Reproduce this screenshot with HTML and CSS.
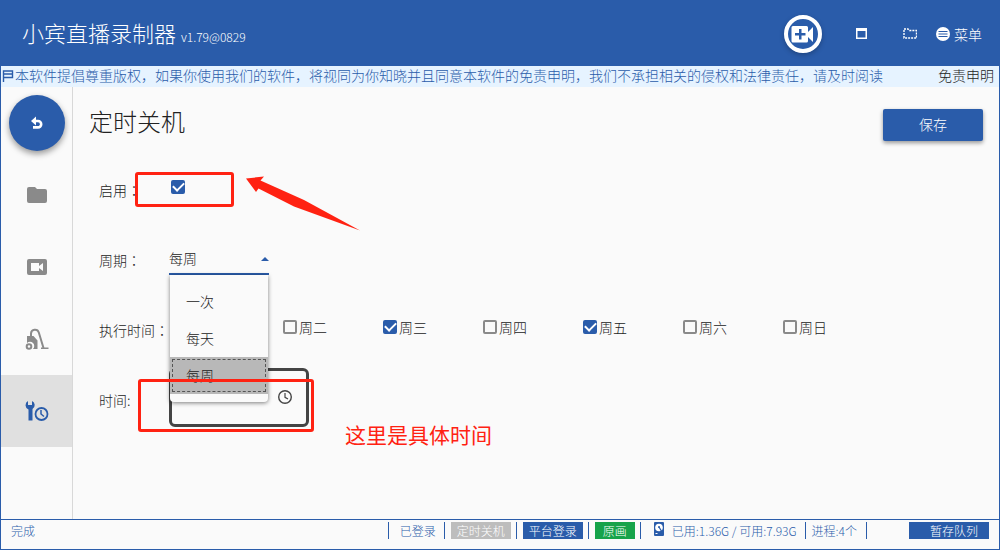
FILE: index.html
```html
<!DOCTYPE html>
<html lang="zh-CN">
<head>
<meta charset="utf-8">
<title>小宾直播录制器</title>
<link rel="stylesheet" href="styles.css">
</head>
<body>
<div class="app">
  <header class="topbar">
    <h1 class="brand">小宾直播录制器 <small class="version">v1.79@0829</small></h1>
    <nav class="tools">
      <button class="record" aria-label="添加录制">
        <svg width="28" height="28" viewBox="0 0 28 28"><path fill="#fff" fill-rule="evenodd" d="M4 6h13.500q1.500 0 1.500 1.500V12l5-5v15l-5-5v4q0 1.500-1.500 1.500H4q-1.500 0-1.500-1.500V7.500Q2.500 6 4 6zM10 9v4H6v2.500h4v4h2.500v-4h4V13h-4V9z"/></svg>
      </button>
      <button class="tool" aria-label="窗口"><svg width="12" height="12" viewBox="0 0 12 12"><path fill="#fff" fill-rule="evenodd" d="M1 0h11v11H1zM2.500 3v6.500h8V3z"/></svg></button>
      <button class="tool" aria-label="全屏"><svg width="14" height="12" viewBox="0 0 14 12"><path fill="none" stroke="#fff" stroke-width="1.400" stroke-dasharray="2 1" d="M1 10V1h4l1.500 1.500h7V10z"/></svg></button>
      <button class="menu-button"><svg width="14" height="14" viewBox="0 0 14 14"><circle cx="7" cy="7" r="7" fill="#fff"/><path stroke="#2a5caa" stroke-width="1.200" d="M2.500 4.500h9M2.500 7h9M2.500 9.500h9"/></svg>菜单</button>
    </nav>
  </header>

  <div class="notice">
    <svg class="flag" width="12" height="14" viewBox="0 0 12 14"><path fill="none" stroke="#2a5caa" stroke-width="1.400" d="M1.500 14V3h9v6.500h-9M1.500 6h9"/></svg>
    <p class="notice-text">本软件提倡尊重版权，如果你使用我们的软件，将视同为你知晓并且同意本软件的免责申明，我们不承担相关的侵权和法律责任，请及时阅读</p>
    <a class="notice-link" href="#">免责申明</a>
  </div>

  <div class="body">
    <nav class="sidebar">
      <div class="slot"><button class="back" aria-label="返回"><svg width="14" height="14" viewBox="0 0 14 14"><path fill="none" stroke="#fff" stroke-width="2.600" d="M4 5h4a3.200 3.200 0 0 1 0 6.400H3"/><path fill="#fff" d="M1 5 6 .5v9z"/></svg></button></div>
      <a class="slot" href="#" aria-label="文件"><svg width="24" height="24" viewBox="0 0 24 24"><path fill="#8a8a8a" d="M10 4H4a2 2 0 0 0-2 2v12a2 2 0 0 0 2 2h16a2 2 0 0 0 2-2V8a2 2 0 0 0-2-2h-8z"/></svg></a>
      <a class="slot" href="#" aria-label="录像"><svg width="24" height="24" viewBox="0 0 24 24"><path fill="#8a8a8a" fill-rule="evenodd" d="M4 4h16a2 2 0 0 1 2 2v12a2 2 0 0 1-2 2H4a2 2 0 0 1-2-2V6a2 2 0 0 1 2-2zM6 8v8h8v-3l4 3V8l-4 3V8z"/></svg></a>
      <a class="slot" href="#" aria-label="清理"><svg width="24" height="24" viewBox="0 0 24 24"><path fill="none" stroke="#8a8a8a" stroke-width="2" d="M6 10V6.500a4 4 0 0 1 7.800-1L18.500 21"/><path fill="#8a8a8a" d="M2 9h6.500l4 4.500V22H8a4.200 4.200 0 0 0-6-6zM16 20.500h7.500V22H16z"/><circle cx="4" cy="19.500" r="2.300" fill="none" stroke="#8a8a8a" stroke-width="2"/></svg></a>
      <a class="slot current" href="#" aria-label="定时设置"><svg width="24" height="24" viewBox="0 0 24 24"><path fill="#2a5caa" d="M3 2v4h4V2a4.500 4.500 0 0 1 .5 8v11.500H3.500V10.500A4.700 4.700 0 0 1 3 2z"/><circle cx="16.500" cy="15" r="6" fill="none" stroke="#2a5caa" stroke-width="1.800"/><path fill="none" stroke="#2a5caa" stroke-width="1.500" d="M16 11v4l3 2.500"/></svg></a>
    </nav>

    <main class="content">
      <div class="heading">
        <h2 class="title">定时关机</h2>
        <button class="save">保存</button>
      </div>

      <form class="form">
        <div class="row">
          <label class="label" for="enable">启用<span class="colon" lang="zh-TW">：</span></label>
          <div class="control inset"><input class="check" type="checkbox" id="enable" checked></div>
        </div>
        <div class="row">
          <label class="label" for="period">周期<span class="colon" lang="zh-TW">：</span></label>
          <div class="control">
            <div class="dropdown">
              <select class="select" id="period"><option>一次</option><option>每天</option><option selected>每周</option></select>
              <ul class="menu" role="listbox">
                <li class="option" role="option">一次</li>
                <li class="option" role="option">每天</li>
                <li class="option chosen" role="option" aria-selected="true">每周</li>
              </ul>
            </div>
          </div>
        </div>
        <div class="row">
          <span class="label">执行时间<span class="colon" lang="zh-TW">：</span></span>
          <div class="control days">
            <label class="day"><input class="check" type="checkbox" aria-label="周一"></label>
            <label class="day"><input class="check" type="checkbox">周二</label>
            <label class="day"><input class="check" type="checkbox" checked>周三</label>
            <label class="day"><input class="check" type="checkbox">周四</label>
            <label class="day"><input class="check" type="checkbox" checked>周五</label>
            <label class="day"><input class="check" type="checkbox">周六</label>
            <label class="day"><input class="check" type="checkbox">周日</label>
          </div>
        </div>
        <div class="row">
          <label class="label" for="time">时间:</label>
          <div class="control">
            <div class="time">
              <input class="time-input" type="text" id="time">
              <svg width="16" height="16" viewBox="0 0 16 16"><circle cx="8" cy="8" r="6.300" fill="none" stroke="#444" stroke-width="1.400"/><path fill="none" stroke="#444" stroke-width="1.200" d="M8 4v4.300l3 1.800"/></svg>
            </div>
          </div>
        </div>
      </form>
    </main>
  </div>

  <footer class="status">
    <span class="state">完成</span>
    <span class="cell login">已登录</span>
    <span class="cell"><span class="tag muted">定时关机</span></span>
    <span class="cell"><button class="tag">平台登录</button></span>
    <span class="cell"><button class="tag green">原画</button></span>
    <span class="cell disk"><svg width="12" height="14" viewBox="0 0 12 14"><rect x="1" width="10" height="14" rx="1" fill="#2a5caa"/><circle cx="6" cy="5.500" r="3.800" fill="#fff"/><circle cx="6" cy="5" r="1" fill="#2a5caa"/><path stroke="#2a5caa" stroke-width="1.300" d="m6 5 3 5"/><path stroke="#fff" d="M2.500 11.500h2"/></svg>已用:1.36G / 可用:7.93G</span>
    <span class="cell process">进程:4个</span>
    <span class="cell last"><button class="tag queue">暂存队列</button></span>
  </footer>

  <div class="mark mark-enable"></div>
  <div class="mark mark-time"></div>
  <svg class="arrow" width="116" height="58" viewBox="0 0 116 58"><path fill="#ff2212" d="M2 3.500 20 1.500l-3.500 4L60 25l56 30.500L50 31.500 14.500 13.500l-2.500 3.500z"/></svg>
  <p class="remark">这里是具体时间</p>
</div>
</body>
</html>
```

FILE: styles.css
```css
* {
  box-sizing: border-box;
}

body {
  margin: 0;
  font-family: "Noto Sans CJK SC", sans-serif;
  font-size: 14px;
  font-weight: 300;
  line-height: 20px;
  color: #222;
}

button, input, select {
  font: inherit;
  color: inherit;
  margin: 0;
  padding: 0;
  border: 0;
  background: none;
}

h1, h2, p, ul {
  margin: 0;
  padding: 0;
  font-weight: inherit;
}

a {
  color: inherit;
  text-decoration: none;
}

svg {
  display: block;
  flex: none;
}

.app {
  position: relative;
  display: flex;
  flex-direction: column;
  min-height: 100vh;
  border: 1px solid #2a5caa;
  border-top: 0;
  background: #fafafa;
}

.topbar {
  display: flex;
  align-items: center;
  justify-content: space-between;
  height: 66px;
  padding: 2px 17px 0 21px;
  background: #2a5caa;
  color: #fff;
}

.brand {
  font-size: 22px;
  line-height: 32px;
}

.version {
  font-size: 12px;
}

.tools {
  display: flex;
  align-items: center;
}

.record {
  display: grid;
  place-items: center;
  width: 38px;
  height: 38px;
  margin-right: 33px;
  border: 4px solid #fff;
  border-radius: 50%;
  box-shadow: 0 2px 5px rgba(0, 0, 0, 0.25);
}

.tool {
  margin-right: 36px;
}

.tool + .tool {
  margin-right: 19px;
}

.menu-button {
  display: flex;
  align-items: center;
  gap: 4px;
}

.notice {
  display: flex;
  align-items: center;
  height: 21px;
  padding: 0 5px 4px 1px;
  background: #e6f3ff;
  color: #2a5caa;
}

.notice-text {
  flex: 1;
  margin-left: 1px;
  white-space: nowrap;
}

.notice-link {
  color: #222;
}

.body {
  display: flex;
  flex: 1;
}

.sidebar {
  width: 72px;
  border-right: 1px solid #d8d8d8;
}

.slot {
  display: grid;
  place-items: center;
  height: 72px;
}

.current {
  background: #e0e0e0;
}

.back {
  display: grid;
  place-items: center;
  width: 56px;
  height: 56px;
  border-radius: 50%;
  background: #2a5caa;
  box-shadow: 0 3px 6px rgba(0, 0, 0, 0.4);
}

.content {
  flex: 1;
  padding: 0 16px;
}

.heading {
  display: flex;
  justify-content: space-between;
  height: 68px;
  padding-top: 16px;
}

.title {
  font-size: 24px;
  line-height: 36px;
}

.save {
  width: 100px;
  height: 32px;
  margin-top: 6px;
  padding-bottom: 2px;
  border-radius: 2px;
  background: #2a5caa;
  color: #fff;
  box-shadow: 0 2px 4px rgba(0, 0, 0, 0.4);
}

.form {
  padding-left: 10px;
}

.row {
  display: flex;
  align-items: center;
  height: 70px;
}

.label {
  width: 70px;
  white-space: nowrap;
}

.colon {
  font-family: "Noto Sans CJK TC", sans-serif;
}

.control {
  flex: 1;
  padding-bottom: 6px;
}

.inset {
  display: flex;
  padding-left: 2px;
}

.check {
  appearance: none;
  display: grid;
  place-items: center;
  width: 14px;
  height: 14px;
  border: 2px solid #8a8a8a;
  border-radius: 2px;
}

.check:checked {
  border-color: #2a5caa;
  background: #2a5caa;
}

.check:checked::after {
  content: "";
  width: 9px;
  height: 5px;
  margin-top: -3px;
  border: solid #fff;
  border-width: 0 0 2px 2px;
  transform: rotate(-45deg);
}

.dropdown {
  position: relative;
  width: 100px;
  margin-top: 4px;
}

.dropdown::after {
  content: "";
  position: absolute;
  right: 0;
  top: 14px;
  border: 4px solid transparent;
  border-top: 0;
  border-bottom-color: #2a5caa;
}

.select {
  appearance: none;
  display: block;
  width: 100%;
  height: 32px;
  border-bottom: 2px solid #2a5caa;
}

.menu {
  position: absolute;
  z-index: 1;
  top: 100%;
  left: 1px;
  right: 1px;
  padding: 8px 0;
  list-style: none;
  background: #fafafa;
  border-radius: 0 0 4px 4px;
  box-shadow: 0 1px 4px rgba(0, 0, 0, 0.5);
}

.option {
  padding: 8px 16px;
  line-height: 21px;
}

.chosen {
  background: #b8b8b8;
  outline: 1px dashed #555;
  outline-offset: -3px;
}

.days {
  display: flex;
  padding-left: 14px;
}

.day {
  display: flex;
  align-items: center;
  gap: 2px;
  width: 100px;
}

.time {
  display: flex;
  align-items: center;
  width: 140px;
  height: 59px;
  padding-right: 13px;
  border: 3px solid #444;
  border-radius: 6px;
}

.time-input {
  flex: 1;
  min-width: 0;
  height: 40px;
  padding-left: 12px;
}

.status {
  display: flex;
  height: 30px;
  padding: 2px 10px 0;
  border-top: 1px solid #2a5caa;
  color: #2a5caa;
  font-size: 12px;
  line-height: 18px;
}

.state {
  margin-right: auto;
}

.cell {
  display: flex;
  height: 17px;
  padding: 0 5px 0 6px;
  border-left: 1px solid #2a5caa;
  white-space: nowrap;
}

.login {
  padding: 0 8px 0 11px;
}

.tag {
  width: 60px;
  height: 17px;
  background: #2a5caa;
  color: #fff;
  line-height: 18px;
  text-align: center;
}

.muted {
  background: #bdbdbd;
}

.green {
  width: 40px;
  background: #16a34a;
}

.disk {
  gap: 7px;
  padding: 0 8px 0 12px;
}

.process {
  padding-right: 9px;
}

.last {
  padding: 0 0 0 42px;
}

.queue {
  width: 80px;
  padding-left: 10px;
}

.mark {
  position: absolute;
  z-index: 2;
  border: 3px solid #ff2212;
  border-radius: 3px;
  pointer-events: none;
}

.mark-enable {
  left: 134px;
  top: 172px;
  width: 99px;
  height: 35px;
}

.mark-time {
  left: 137px;
  top: 379px;
  width: 176px;
  height: 53px;
}

.arrow {
  position: absolute;
  left: 243px;
  top: 175px;
}

.remark {
  position: absolute;
  left: 344px;
  top: 419px;
  color: #ff2212;
  font-size: 21px;
  font-weight: 400;
  line-height: 30px;
}
```
